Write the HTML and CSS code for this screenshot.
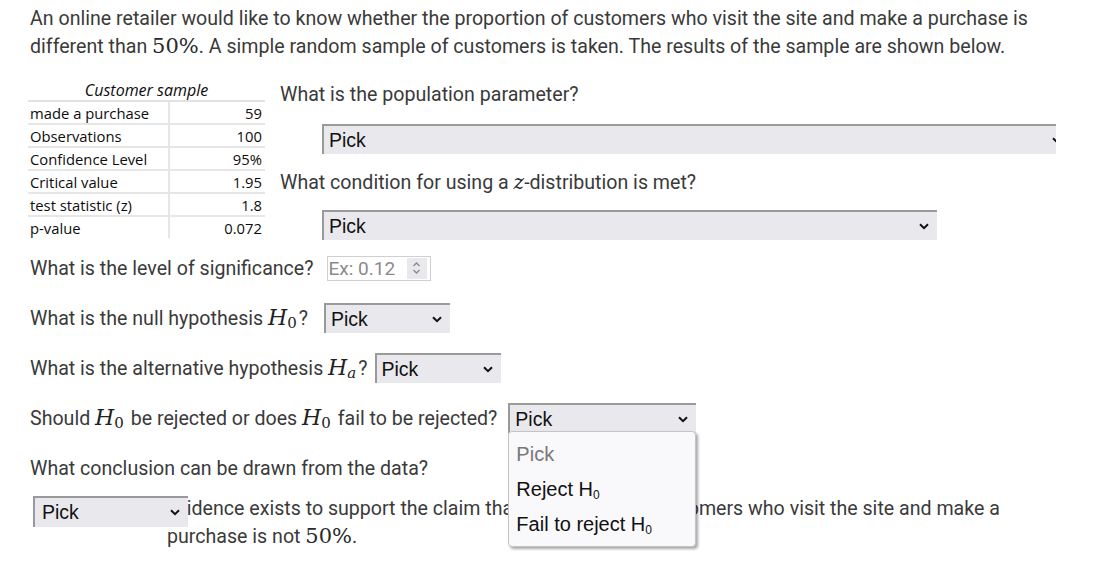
FILE: index.html
```html
<!DOCTYPE html>
<html>
<head>
<meta charset="utf-8">
<link rel="stylesheet" href="styles.css">
</head>
<body>
<div class="page">
  <p class="intro">An online retailer would like to know whether the proportion of customers who visit the site and make a purchase is different than <span class="m">50%</span>. A simple random sample of customers is taken. The results of the sample are shown below.</p>

  <div class="top">
    <table class="sample">
      <tr><th colspan="2">Customer sample</th></tr>
      <tr><td>made a purchase</td><td class="v">59</td></tr>
      <tr><td>Observations</td><td class="v">100</td></tr>
      <tr><td>Confidence Level</td><td class="v">95%</td></tr>
      <tr><td>Critical value</td><td class="v">1.95</td></tr>
      <tr><td>test statistic (z)</td><td class="v">1.8</td></tr>
      <tr><td>p-value</td><td class="v">0.072</td></tr>
    </table>
    <div class="qcol">
      <div class="q">What is the population parameter?</div>
      <div class="sel sel-param"><span class="pick">Pick</span><svg class="chev" width="10" height="7" viewBox="0 0 10 7"><path d="M1 1.2 L5 5.2 L9 1.2" fill="none" stroke="#111" stroke-width="2"/></svg></div>
      <div class="q">What condition for using a <span class="mi mz">z</span>-distribution is met?</div>
      <div class="sel sel-cond"><span class="pick">Pick</span><svg class="chev" width="10" height="7" viewBox="0 0 10 7"><path d="M1 1.2 L5 5.2 L9 1.2" fill="none" stroke="#111" stroke-width="2"/></svg></div>
    </div>
  </div>

  <div class="row">
    <span>What is the level of significance?</span>
    <div class="num">
      <span class="ph">Ex: 0.12</span>
      <span class="spin"><svg width="9" height="14" viewBox="0 0 9 14"><path d="M1.5 5 L4.5 2 L7.5 5 M1.5 9 L4.5 12 L7.5 9" fill="none" stroke="#8a8a8a" stroke-width="1.3"/></svg></span>
    </div>
  </div>

  <div class="row">
    <span>What is the null hypothesis <span class="mi">H</span><sub class="ms">0</sub>?</span>
    <div class="sel sel-null"><span class="pick">Pick</span><svg class="chev" width="10" height="7" viewBox="0 0 10 7"><path d="M1 1.2 L5 5.2 L9 1.2" fill="none" stroke="#111" stroke-width="2"/></svg></div>
  </div>

  <div class="row">
    <span>What is the alternative hypothesis <span class="mi">H</span><sub class="ms ms-i">a</sub>?</span>
    <div class="sel sel-alt"><span class="pick">Pick</span><svg class="chev" width="10" height="7" viewBox="0 0 10 7"><path d="M1 1.2 L5 5.2 L9 1.2" fill="none" stroke="#111" stroke-width="2"/></svg></div>
  </div>

  <div class="row">
    <span>Should <span class="mi">H</span><sub class="ms">0</sub> be rejected or does <span class="mi">H</span><sub class="ms">0</sub> fail to be rejected?</span>
    <div class="dd">
      <div class="sel sel-rej"><span class="pick">Pick</span><svg class="chev" width="10" height="7" viewBox="0 0 10 7"><path d="M1 1.2 L5 5.2 L9 1.2" fill="none" stroke="#111" stroke-width="2"/></svg></div>
      <ul class="menu">
        <li class="muted">Pick</li>
        <li>Reject H<sub>0</sub></li>
        <li>Fail to reject H<sub>0</sub></li>
      </ul>
    </div>
  </div>

  <div class="row">
    <span>What conclusion can be drawn from the data?</span>
  </div>

  <div class="last">
    <div class="sel sel-concl"><span class="pick">Pick</span><svg class="chev" width="10" height="7" viewBox="0 0 10 7"><path d="M1 1.2 L5 5.2 L9 1.2" fill="none" stroke="#111" stroke-width="2"/></svg></div>
    <p class="claim">evidence exists to support the claim that the percent of customers who visit the site and make a purchase is not <span class="m">50%</span>.</p>
  </div>
</div>
</body>
</html>
```
FILE: styles.css
```css
html, body {
  margin: 0;
  padding: 0;
  background: #fff;
}

.page {
  padding: 5px 0 0 30px;
  width: 1040px;
  font-family: Roboto, "Liberation Sans", sans-serif;
  font-size: 19.6px;
  color: #3a3a3a;
}

.intro {
  margin: 0;
  line-height: 28px;
}

.m {
  font-family: "DejaVu Serif", "Liberation Serif", serif;
  font-size: 21px;
  line-height: 0;
  color: #2a2a2a;
}

.mi {
  font-family: "DejaVu Serif", "Liberation Serif", serif;
  font-style: italic;
  font-size: 22px;
  line-height: 0;
  color: #222;
}

.mz {
  font-size: 20px;
}

.ms {
  font-family: "DejaVu Serif", "Liberation Serif", serif;
  font-size: 15px;
  vertical-align: -3px;
  line-height: 0;
  color: #222;
  margin-right: 2px;
}

.ms-i {
  font-style: italic;
}

.top {
  display: flex;
  margin-top: 20px;
}

.sample {
  margin-left: -2px;
  width: 237px;
  border-collapse: collapse;
  font-family: "Open Sans", "Noto Sans", sans-serif;
  font-size: 14.8px;
  color: #0d0d0d;
  align-self: flex-start;
}

.sample th {
  font-weight: normal;
  font-style: italic;
  font-size: 16px;
  text-align: center;
  height: 18px;
  padding: 0 0 1px 0;
  line-height: 16px;
  border-bottom: 2px solid #e2e2e2;
}

.sample td {
  height: 21px;
  padding: 0 0 0 2px;
  border-bottom: 2px solid #e6e6e6;
  white-space: nowrap;
}

.sample tr:last-child td {
  border-bottom: none;
}

.sample td.v {
  text-align: right;
  padding: 0 3px 0 0;
  border-left: 2px solid #e6e6e6;
  width: 92px;
}

.qcol {
  margin-left: 15px;
  margin-top: 0;
  width: 776px;
  overflow: hidden;
}

.q {
  line-height: 28px;
}

.sel {
  position: relative;
  display: flex;
  align-items: center;
  box-sizing: border-box;
  height: 30px;
  background: #e9e9ed;
  border-top: 2px solid #9a9a9a;
  border-left: 2px solid #9a9a9a;
  font-family: "Liberation Sans", Arial, sans-serif;
  font-size: 19.5px;
  color: #111;
  padding-left: 5px;
  flex-shrink: 0;
}

.sel .pick {
  flex: 1;
}

.sel .chev {
  margin-right: 8px;
}

.sel-param {
  width: 748px;
  margin: 15px 0 15px 42px;
}

.sel-cond {
  width: 615px;
  margin: 13px 0 0 42px;
}

.row {
  display: flex;
  align-items: center;
  height: 50px;
}

.top + .row {
  margin-top: 3px;
}

.num {
  display: flex;
  align-items: center;
  box-sizing: border-box;
  width: 104px;
  height: 25px;
  margin-left: 13px;
  border: 1px solid #cfcfcf;
  padding: 1px 3px 1px 1px;
}

.num .ph {
  flex: 1;
  color: #8a8a8a;
  font-size: 19px;
}

.num .spin {
  display: flex;
  align-items: center;
  justify-content: center;
  width: 20px;
  height: 21px;
  background: #e9e9ed;
}

.sel-null {
  width: 126px;
  margin-left: 16px;
}

.sel-alt {
  width: 126px;
  margin-left: 7px;
}

.dd {
  position: relative;
  margin-left: 11px;
}

.sel-rej {
  width: 188px;
}

.menu {
  position: absolute;
  top: 28px;
  left: 0;
  z-index: 5;
  box-sizing: border-box;
  width: 188px;
  margin: 0;
  padding: 5px 0 4px 0;
  list-style: none;
  background: #f9f9fb;
  border: 1px solid #c4c4c4;
  border-radius: 4px;
  box-shadow: 2px 2px 3px rgba(0, 0, 0, 0.35);
  font-family: "Liberation Sans", Arial, sans-serif;
  font-size: 20px;
  color: #111;
}

.menu li {
  height: 35px;
  line-height: 35px;
  padding-left: 7px;
}

.menu li.muted {
  color: #777;
}

.menu sub {
  font-size: 12px;
  vertical-align: -3px;
  line-height: 0;
}

.last {
  display: flex;
  align-items: flex-start;
}

.sel-concl {
  width: 155px;
  height: 31px;
  margin: 3px 0 0 3px;
  z-index: 2;
  padding-left: 7px;
}

.claim {
  position: relative;
  margin: 2px 0 0 -21px;
  width: 880px;
  line-height: 28px;
  z-index: 1;
}
```
